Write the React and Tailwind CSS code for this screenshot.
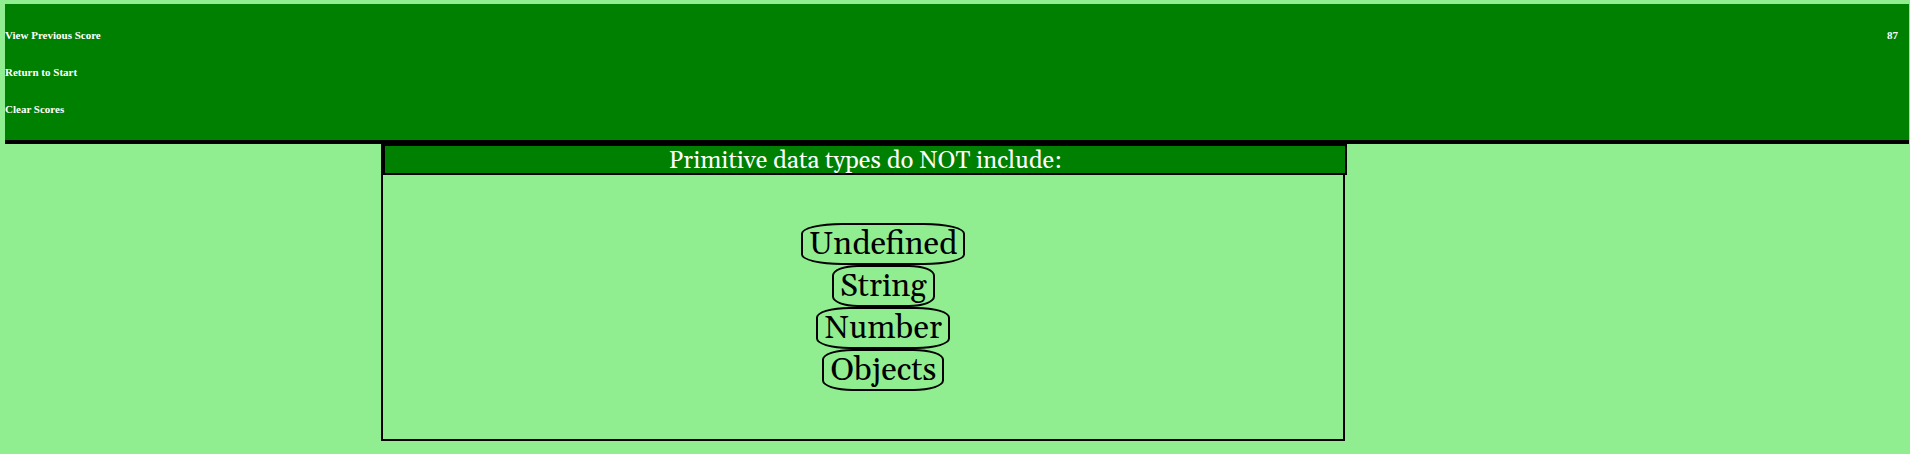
const answers = ['Undefined', 'String', 'Number', 'Objects'];

export default function App() {
  return (
    <div className="min-h-screen bg-[#90ee90] pt-1 pr-px pl-[5px] font-['Liberation_Serif',serif] text-black">
      <header className="flex items-start justify-between border-b-4 border-black bg-[#008000] py-[25px] pr-[11px] text-[11px] leading-3 font-bold text-white">
        <nav className="flex flex-col items-start gap-[25px]">
          <a href="#scores">View Previous Score</a>
          <a href="#start">Return to Start</a>
          <button type="button">Clear Scores</button>
        </nav>
        <span>87</span>
      </header>
      <main className="mr-[29.6%] ml-[19.75%] border-x-2 border-b-2 border-black font-[Georgia,Gelasio,'Liberation_Serif',serif]">
        <h1 className="mr-[-4px] border-2 border-black bg-[#008000] pt-[3px] text-center text-[24px] leading-6 text-white">
          Primitive data types do NOT include:
        </h1>
        <ul className="flex flex-col items-center py-12 pl-10">
          {answers.map((answer) => (
            <li key={answer} className="flex">
              <button
                type="button"
                className="rounded-[25%] border-2 border-black px-1.5 pt-[2px] text-[32px] leading-9"
              >
                {answer}
              </button>
            </li>
          ))}
        </ul>
      </main>
    </div>
  );
}
